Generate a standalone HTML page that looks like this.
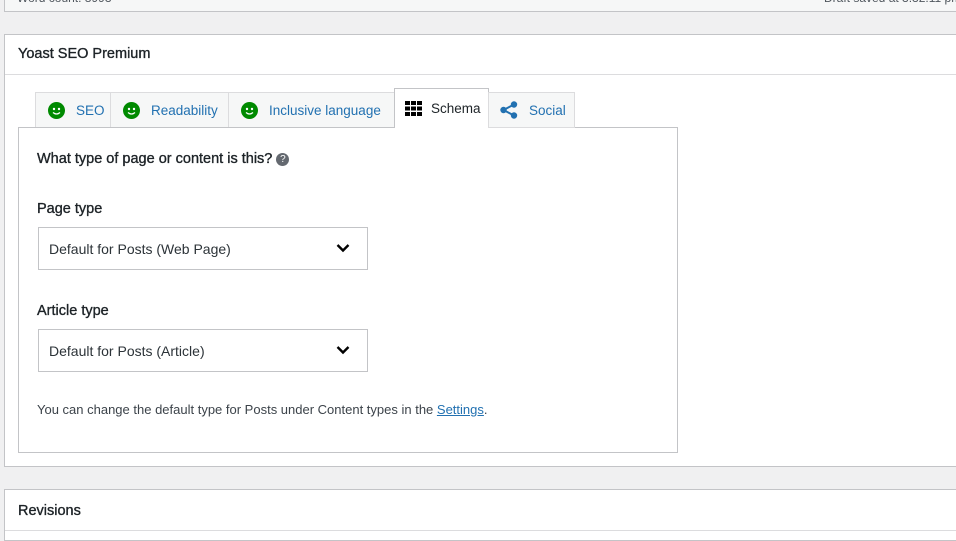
<!DOCTYPE html>
<html style="overflow:hidden"><head><meta charset="utf-8"><style>
*{margin:0;padding:0;box-sizing:border-box}
html,body{width:956px;height:541px;overflow:hidden}
body{background:#f0f0f1;position:relative;font-family:"Liberation Sans",sans-serif;color:#1d2327}
.a{position:absolute;white-space:nowrap}
.box{background:#fff;border:1px solid #c3c4c7;border-right:none}
.tab{position:absolute;top:92px;height:36px;border:1px solid #dcdcde;background:#f6f7f7;font-size:13.5px;color:#2271b1;display:flex;align-items:center;padding-left:12px;white-space:nowrap;overflow:hidden}
.sm{width:17px;height:17px;margin-right:11px;flex:none}
.sel{position:absolute;left:38px;width:330px;height:43px;border:1px solid #c3c4c7;background:#fff;font-size:14px;padding-left:10px;display:flex;align-items:center;color:#2c3338}
.lbl{position:absolute;left:37px;font-size:14.5px;color:#1d2327;-webkit-text-stroke:0.35px #1d2327}
</style></head><body>
<div class="a" style="left:4px;top:-10px;width:960px;height:22px;background:#f6f7f7;border:1px solid #c3c4c7;border-right:none"></div>
<div class="a" style="left:17px;top:-9px;font-size:12px;color:#50575e">Word count: 8993</div>
<div class="a" style="left:824px;top:-9px;font-size:12px;color:#50575e">Draft saved at 3:32:11 pm</div>

<div class="a box" style="left:4px;top:34px;width:960px;height:433px"></div>
<div class="a" style="left:5px;top:74px;width:960px;height:1px;background:#dcdcde"></div>
<div class="lbl a" style="left:18px;top:46px">Yoast SEO Premium</div>

<div class="tab" style="left:35px;width:76px"><svg class="sm" viewBox="0 0 17 17"><circle cx="8.5" cy="8.5" r="8.5" fill="#008a00"/><circle cx="6" cy="7" r="1.2" fill="#fff"/><circle cx="11" cy="7" r="1.2" fill="#fff"/><path d="M5 10.5q3.5 3 7 0" stroke="#fff" stroke-width="1.3" fill="none"/></svg>SEO</div>
<div class="tab" style="left:110px;width:119px"><svg class="sm" viewBox="0 0 17 17"><circle cx="8.5" cy="8.5" r="8.5" fill="#008a00"/><circle cx="6" cy="7" r="1.2" fill="#fff"/><circle cx="11" cy="7" r="1.2" fill="#fff"/><path d="M5 10.5q3.5 3 7 0" stroke="#fff" stroke-width="1.3" fill="none"/></svg>Readability</div>
<div class="tab" style="left:228px;width:167px"><svg class="sm" viewBox="0 0 17 17"><circle cx="8.5" cy="8.5" r="8.5" fill="#008a00"/><circle cx="6" cy="7" r="1.2" fill="#fff"/><circle cx="11" cy="7" r="1.2" fill="#fff"/><path d="M5 10.5q3.5 3 7 0" stroke="#fff" stroke-width="1.3" fill="none"/></svg>Inclusive language</div>
<div class="a" style="left:18px;top:127px;width:660px;height:326px;border:1px solid #c3c4c7;background:#fff"></div>
<div class="tab" style="left:394px;top:88px;height:40px;width:95px;background:#fff;border-color:#c3c4c7;border-bottom:none;color:#1d2327;padding-left:10px"><svg width="17" height="15" viewBox="0 0 17 15" style="margin-right:9px;flex:none"><g fill="#000"><rect x="0" y="0" width="5" height="4"/><rect x="6" y="0" width="5" height="4"/><rect x="12" y="0" width="5" height="4"/><rect x="0" y="5.5" width="5" height="4"/><rect x="6" y="5.5" width="5" height="4"/><rect x="12" y="5.5" width="5" height="4"/><rect x="0" y="11" width="5" height="4"/><rect x="6" y="11" width="5" height="4"/><rect x="12" y="11" width="5" height="4"/></g></svg>Schema</div>
<div class="tab" style="left:488px;width:87px;padding-left:11px"><svg width="18" height="18" viewBox="0 0 18 18" style="margin-right:11px;flex:none"><g fill="#2271b1"><circle cx="14" cy="3.5" r="3.2"/><circle cx="14" cy="14.5" r="3.2"/><circle cx="3.5" cy="9" r="3.2"/></g><path d="M3.5 9L14 3.5M3.5 9L14 14.5" stroke="#2271b1" stroke-width="2"/></svg>Social</div>

<div class="lbl a" style="top:151px">What type of page or content is this? <span style="display:inline-block;width:13px;height:13px;border-radius:50%;background:#646970;color:#fff;font-size:10px;text-align:center;line-height:13px;vertical-align:1px;-webkit-text-stroke:0">?</span></div>
<div class="lbl" style="top:201px">Page type</div>
<div class="sel" style="top:227px">Default for Posts (Web Page)<svg class="a" style="left:297px;top:15px" width="14" height="10" viewBox="0 0 14 10"><path d="M1.5 2L7 7.5 12.5 2" stroke="#000" stroke-width="2.4" fill="none"/></svg></div>
<div class="lbl" style="top:303px">Article type</div>
<div class="sel" style="top:329px">Default for Posts (Article)<svg class="a" style="left:297px;top:15px" width="14" height="10" viewBox="0 0 14 10"><path d="M1.5 2L7 7.5 12.5 2" stroke="#000" stroke-width="2.4" fill="none"/></svg></div>
<div class="a" style="left:37px;top:402px;font-size:13px;color:#3c434a">You can change the default type for Posts under Content types in the <span style="color:#2271b1;text-decoration:underline">Settings</span>.</div>

<div class="a box" style="left:4px;top:489px;width:960px;height:52px"></div>
<div class="a" style="left:5px;top:530px;width:960px;height:1px;background:#dcdcde"></div>
<div class="lbl a" style="left:18px;top:503px">Revisions</div>
</body></html>
